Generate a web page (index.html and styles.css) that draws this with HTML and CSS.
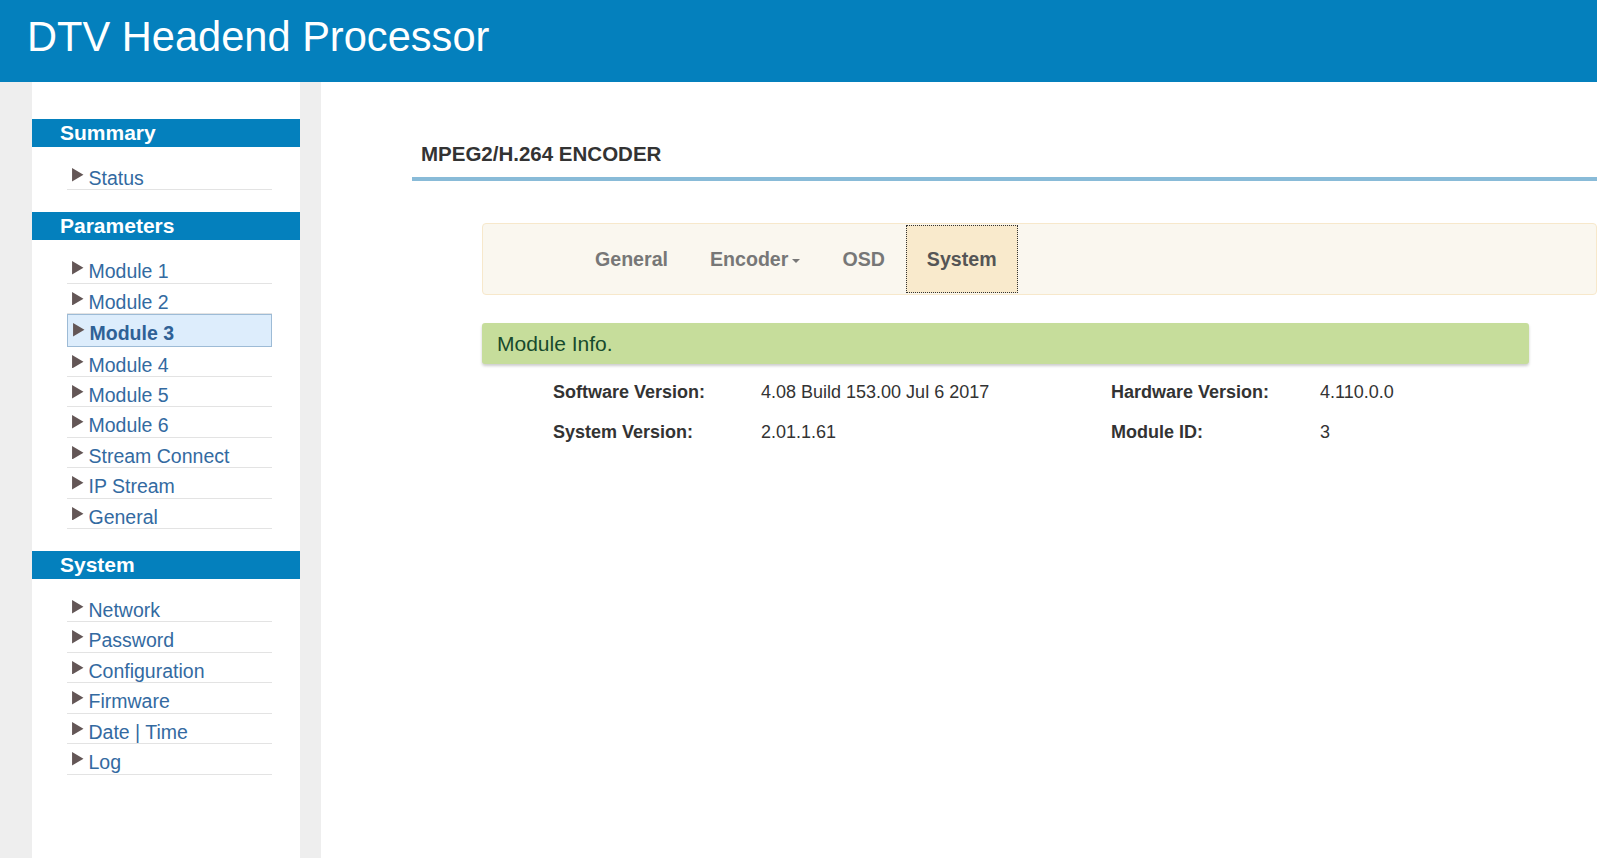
FILE: index.html
```html
<!DOCTYPE html>
<html lang="en">
  <head>
    <meta charset="UTF-8" />
    <meta name="viewport" content="width=device-width, initial-scale=1.0" />
    <title>DTV Headend Processor</title>
    <link rel="stylesheet" href="styles.css">
  </head>
  <body>
    <!-- Top banner -->
    <div class="banner">DTV Headend Processor</div>

    <div class="page">
      <!-- Left menu -->
      <div class="menu">
        <div class="menu-head">Summary</div>
        <ul class="menu-list">
          <li><a href="#"><svg class="arrow" viewBox="0 0 11 13"><polygon points="0,0 11,6.5 0,13" /></svg>Status</a></li>
        </ul>

        <div class="menu-head">Parameters</div>
        <ul class="menu-list">
          <li><a href="#"><svg class="arrow" viewBox="0 0 11 13"><polygon points="0,0 11,6.5 0,13" /></svg>Module 1</a></li>
          <li><a href="#"><svg class="arrow" viewBox="0 0 11 13"><polygon points="0,0 11,6.5 0,13" /></svg>Module 2</a></li>
          <li class="current"><a href="#"><svg class="arrow" viewBox="0 0 11 13"><polygon points="0,0 11,6.5 0,13" /></svg>Module 3</a></li>
          <li><a href="#"><svg class="arrow" viewBox="0 0 11 13"><polygon points="0,0 11,6.5 0,13" /></svg>Module 4</a></li>
          <li><a href="#"><svg class="arrow" viewBox="0 0 11 13"><polygon points="0,0 11,6.5 0,13" /></svg>Module 5</a></li>
          <li><a href="#"><svg class="arrow" viewBox="0 0 11 13"><polygon points="0,0 11,6.5 0,13" /></svg>Module 6</a></li>
          <li><a href="#"><svg class="arrow" viewBox="0 0 11 13"><polygon points="0,0 11,6.5 0,13" /></svg>Stream Connect</a></li>
          <li><a href="#"><svg class="arrow" viewBox="0 0 11 13"><polygon points="0,0 11,6.5 0,13" /></svg>IP Stream</a></li>
          <li><a href="#"><svg class="arrow" viewBox="0 0 11 13"><polygon points="0,0 11,6.5 0,13" /></svg>General</a></li>
        </ul>

        <div class="menu-head">System</div>
        <ul class="menu-list">
          <li><a href="#"><svg class="arrow" viewBox="0 0 11 13"><polygon points="0,0 11,6.5 0,13" /></svg>Network</a></li>
          <li><a href="#"><svg class="arrow" viewBox="0 0 11 13"><polygon points="0,0 11,6.5 0,13" /></svg>Password</a></li>
          <li><a href="#"><svg class="arrow" viewBox="0 0 11 13"><polygon points="0,0 11,6.5 0,13" /></svg>Configuration</a></li>
          <li><a href="#"><svg class="arrow" viewBox="0 0 11 13"><polygon points="0,0 11,6.5 0,13" /></svg>Firmware</a></li>
          <li><a href="#"><svg class="arrow" viewBox="0 0 11 13"><polygon points="0,0 11,6.5 0,13" /></svg>Date | Time</a></li>
          <li><a href="#"><svg class="arrow" viewBox="0 0 11 13"><polygon points="0,0 11,6.5 0,13" /></svg>Log</a></li>
        </ul>
      </div>

      <!-- Main content -->
      <div class="content">
        <h2 class="page-title">MPEG2/H.264 ENCODER</h2>

        <div class="panel">
          <div class="tabs">
            <ul class="tab-list">
              <li><a href="#">General</a></li>
              <li><a href="#">Encoder<span class="caret"></span></a></li>
              <li><a href="#">OSD</a></li>
              <li class="active"><a href="#">System</a></li>
            </ul>
          </div>

          <div class="box-title">Module Info.</div>
          <div class="info">
            <span class="label">Software Version:</span>
            <span>4.08 Build 153.00 Jul 6 2017</span>
            <span class="label">Hardware Version:</span>
            <span>4.110.0.0</span>
            <span class="label">System Version:</span>
            <span>2.01.1.61</span>
            <span class="label">Module ID:</span>
            <span>3</span>
          </div>
        </div>
      </div>
    </div>
  </body>
</html>
```

FILE: styles.css
```css
body {
  margin: 0;
  font-family: "Liberation Sans", Arial, sans-serif;
  background-color: #eee;
}

/* Banner */
.banner {
  height: 82px;
  box-sizing: border-box;
  padding: 0 0 8px 27px;
  line-height: 74px;
  font-size: 41.6px;
  color: white;
  background-color: #0480bd;
}

.page {
  display: flex;
  min-height: calc(100vh - 82px);
  padding-left: 32px;
}

/* Left menu */
.menu {
  width: 268px;
  flex-shrink: 0;
  margin-right: 21px;
  padding-top: 37px;
  background-color: white;
}

.menu-head {
  height: 28px;
  line-height: 28px;
  padding-left: 28px;
  font-size: 21px;
  font-weight: bold;
  color: white;
  background-color: #0480bd;
}

.menu-list {
  list-style: none;
  margin: 0 28px 22px 35px;
  padding: 13px 0 0;
}

.menu-list li {
  border-bottom: 1px solid #e3e3e3;
}

.menu-list a {
  display: flex;
  align-items: flex-start;
  padding-top: 7px;
  line-height: 22.4px;
  font-size: 19.5px;
  color: #336aa1;
  text-decoration: none;
}

.menu-list .arrow {
  width: 11.5px;
  height: 13.5px;
  margin: 1px 5px 0 5px;
  flex-shrink: 0;
  fill: #635656;
}

.menu-list li.current {
  border: 1px solid #9dbbd6;
  background-color: #ddedfc;
}

.menu-list li.current a {
  padding-bottom: 1px;
  font-weight: bold;
  color: #2f6196;
}

/* Main content */
.content {
  flex: 1;
  min-width: 0;
  padding: 60px 0 0 91px;
  background-color: white;
}

.page-title {
  margin: 0;
  padding: 0 0 11px 9px;
  line-height: 24px;
  font-size: 20.5px;
  font-weight: bold;
  color: #333;
  border-bottom: 4px solid #89bbd8;
}

.panel {
  margin: 42px 0 0 70px;
}

/* Tab bar */
.tabs {
  border: 1px solid #f7e8cb;
  border-radius: 4px;
  background-color: #faf7ef;
}

.tab-list {
  display: flex;
  list-style: none;
  margin: 0;
  padding: 1px 0 1px 91px;
}

.tab-list a {
  display: block;
  padding: 0 21px;
  line-height: 68px;
  font-size: 19.6px;
  font-weight: bold;
  color: #777;
  text-decoration: none;
}

.tab-list .active a {
  color: #555;
  background-color: #f9eacc;
  outline: 1px dotted #333;
  outline-offset: -1px;
}

.caret {
  display: inline-block;
  width: 0;
  height: 0;
  margin-left: 4px;
  vertical-align: middle;
  border-top: 4px solid #777;
  border-left: 4px solid transparent;
  border-right: 4px solid transparent;
}

/* Module info */
.box-title {
  width: 1047px;
  box-sizing: border-box;
  margin-top: 28px;
  padding-left: 15px;
  height: 41px;
  line-height: 41px;
  font-size: 21px;
  color: #174a2c;
  background-color: #c6dd9b;
  border-radius: 3px;
  box-shadow: 0 2px 3px rgba(0, 0, 0, 0.2);
}

.info {
  display: grid;
  grid-template-columns: 208px 350px 209px auto;
  grid-auto-rows: 40px;
  align-items: center;
  margin-top: 8px;
  padding-left: 71px;
  font-size: 18px;
  color: #333;
}

.info .label {
  font-weight: bold;
}
```
